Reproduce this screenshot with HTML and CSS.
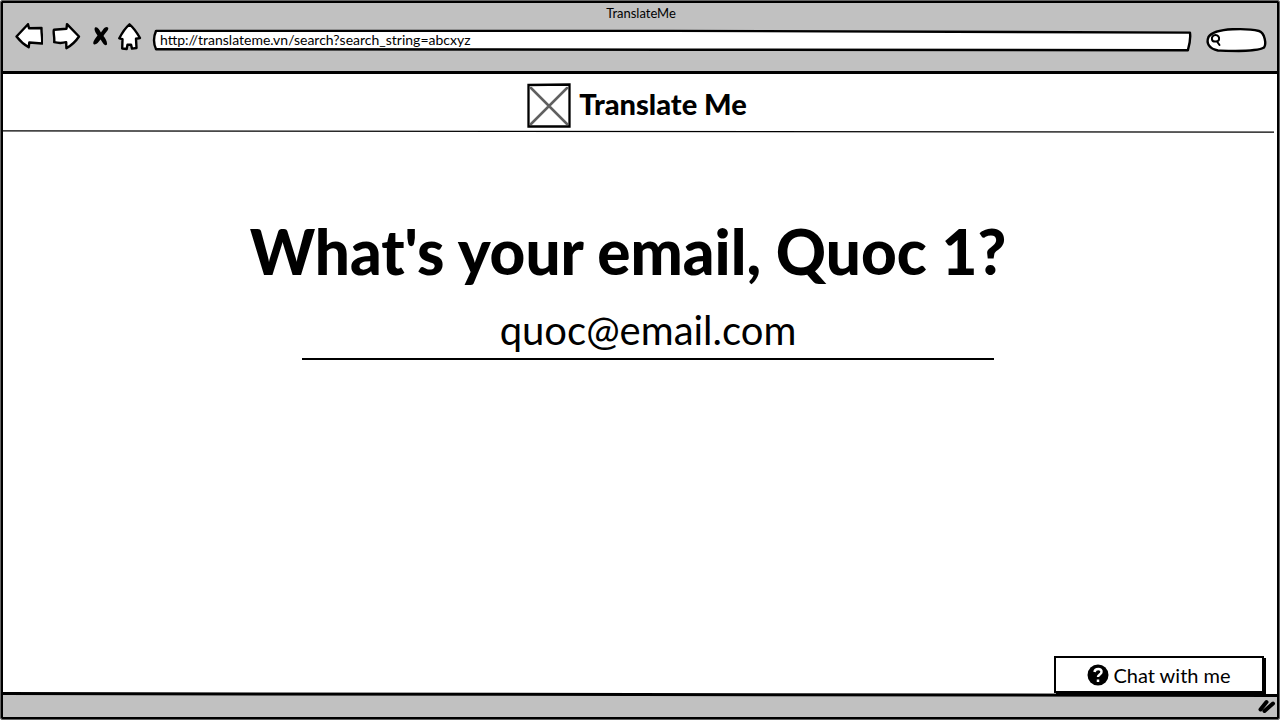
FILE: index.html
```html
<!DOCTYPE html>
<html lang="en">
<head>
<meta charset="utf-8">
<meta name="viewport" content="width=device-width, initial-scale=1">
<title>TranslateMe</title>
<link rel="stylesheet" href="styles.css">
</head>
<body>
<div class="window">
  <header class="chrome">
    <div class="window-title">TranslateMe</div>
    <nav class="toolbar" aria-label="Browser">
      <button class="tool back" aria-label="Back"><svg width="28" height="28" viewBox="0 0 28 28"><path class="ink" d="M1.500 13.500 13 1.200l1 4 12.500-.2c-.3 5 1.200 10 .6 15.500l-12.800-1-.6 4.800Q7 20.500 1.500 13.500Z"/></svg></button>
      <button class="tool forward" aria-label="Forward"><svg width="30" height="28" viewBox="0 0 30 28"><path class="ink" d="M28 13.500 16 1.200l-.5 4.500-12.500 1c-1.200 2 .8 7 .2 12.500q6 1.500 12 0l.2 6Q23 21 28 13.500Z"/></svg></button>
      <button class="tool stop" aria-label="Stop"><svg width="18" height="22" viewBox="0 0 18 22"><path class="cross" d="M3 1.500C5.500 0 7.500 4 9 6.500 11 3.500 13.500-.5 16 1.500 17.500 3.500 13 7 11.500 10c2 2.500 4 6 3.500 8.500-2.500 2.500-4.500-2.500-6.500-5-2 2.500-4 5.500-6.500 5C-.5 16.500 3.500 12.500 5.500 9.500 4 7 1.500 4 3 1.500Z"/></svg></button>
      <button class="tool home" aria-label="Home"><svg width="24" height="28" viewBox="0 0 24 28"><path class="ink" d="M11.500 1.300Q6 6 1.300 15.300l3.200.9-.3 9.300 4.500.5.800-4.200 3.500-.2 1 4 4.500-.6-.5-9.300 4-.7Q17 6 11.500 1.300Z"/></svg></button>
      <label class="address">
        <svg class="frame" viewBox="0 0 1000 20" preserveAspectRatio="none" aria-hidden="true"><path class="ink" d="M2 .8 500 .8 999 2.500Q1000 9 997 19.500L500 19 2 18.500Q-2 10 2 .8Z"/></svg>
        <input type="text" aria-label="Address" value="http://translateme.vn/search?search_string=abcxyz">
      </label>
      <label class="search">
        <svg class="frame" viewBox="0 0 60 25" preserveAspectRatio="none" aria-hidden="true"><path class="ink" d="M1.500 9C8-1 42 .5 52 3c6 2 7.500 13 5 16.500-7 4.500-30 3.500-46 3C2 21-1 15 1.500 9Z"/></svg>
        <svg class="lens" width="12" height="14" viewBox="0 0 12 14" aria-hidden="true"><path d="M5.500 2C3 2 1.500 4 2 6.500 2.500 9.500 8.500 9 9 6.500 9.500 4 8 2 5.500 2ZM7 8.500 9.500 12"/></svg>
        <input type="search" aria-label="Search">
      </label>
    </nav>
  </header>
  <svg class="edge" viewBox="0 0 100 3" preserveAspectRatio="none" aria-hidden="true"><path d="M0 0H100V3H0Z"/></svg>
  <main class="page">
    <div class="brand">
      <svg width="44" height="45" viewBox="0 0 44 45" aria-hidden="true"><path class="diagonal" d="M4 5 40 41M40 5 4 41"/><path class="box" d="M1.500 2 42.500 1.500 42.500 43.500 1.500 43.500Z"/></svg>
      <span>Translate Me</span>
    </div>
    <svg class="divider" viewBox="0 0 100 3" preserveAspectRatio="none" aria-hidden="true"><path d="M0 .8 100 2.200"/></svg>
    <form class="question">
      <h1><label for="email">What's your email, Quoc 1?</label></h1>
      <input id="email" type="text" value="quoc@email.com">
    </form>
  </main>
  <footer class="status">
    <svg class="edge" viewBox="0 0 100 5" preserveAspectRatio="none" aria-hidden="true"><path class="paper" d="M0 0H100V3H0Z"/><path d="M0 0 100 2V5L0 3Z"/></svg>
    <svg class="grip" width="18" height="14" viewBox="0 0 18 14" aria-hidden="true"><path d="M2.500 10.500 8.500 3M6.500 12 15 4.500"/></svg>
  </footer>
  <button class="chat">
    <svg width="22" height="22" viewBox="0 0 22 22" aria-hidden="true"><circle cx="11" cy="11" r="10.500"/><path d="M7.500 8C8 4 15 4 14.500 8c0 2.500-3.500 2.500-3.500 5M11 15.500v2.500"/></svg>
    <span>Chat with me</span>
  </button>
</div>
</body>
</html>
```

FILE: styles.css
```css
* {
  box-sizing: border-box;
}

body {
  margin: 0;
  background: #fff;
  color: #000;
  font-family: Lato, "Open Sans", sans-serif;
}

button,
input {
  font: inherit;
  color: inherit;
  margin: 0;
  padding: 0;
  border: 0;
  background: none;
  outline: 0;
}

svg {
  display: block;
  flex: none;
}

.window {
  position: relative;
  display: flex;
  flex-direction: column;
  min-height: 100vh;
  border: 1px solid #666;
  border-radius: 2px;
  box-shadow: inset 0 0 0 2px #000;
  padding: 2px;
}

.chrome {
  background: #c1c1c1;
  padding: 2px 10px 18px 12px;
}

.window-title {
  text-align: center;
  font-size: 13px;
  line-height: 16px;
}

.toolbar {
  display: flex;
  align-items: center;
  height: 32px;
}

.ink {
  fill: #fff;
  stroke: #000;
  stroke-width: 2.4;
  stroke-linejoin: round;
  vector-effect: non-scaling-stroke;
}

.back {
  margin-right: 8px;
}

.forward {
  margin-right: 11px;
}

.stop {
  margin-right: 8px;
}

.home {
  margin-right: 12px;
}

.address,
.search {
  display: grid;
  align-items: center;
}

.address > *,
.search > * {
  grid-area: 1 / 1;
}

.frame {
  width: 100%;
  height: 100%;
  overflow: visible;
}

.address {
  flex: 1;
  height: 20px;
  margin: 6px 16px 0 0;
  font-size: 14px;
}

.address input {
  width: 100%;
  padding: 0 6px 2px;
  position: relative;
}

.search {
  width: 60px;
  height: 25px;
  margin-top: 6px;
  font-size: 12px;
}

.search input {
  width: 100%;
  padding: 0 8px 0 18px;
  position: relative;
  appearance: none;
}

.lens {
  margin-left: 3px;
  fill: none;
  stroke: #000;
  stroke-width: 2;
  stroke-linecap: round;
}

.edge {
  width: 100%;
  height: 3px;
}

.page {
  flex: 1;
  display: flex;
  flex-direction: column;
}

.brand {
  display: flex;
  justify-content: center;
  align-items: center;
  gap: 8px;
  padding: 9px 6px 2px 0;
  font-size: 29px;
  font-weight: 900;
  line-height: 40px;
}

.brand span {
  padding-bottom: 4px;
}

.diagonal {
  fill: none;
  stroke: #606060;
  stroke-width: 2.5;
  stroke-linecap: round;
}

.box {
  fill: none;
  stroke: #000;
  stroke-width: 2.3;
}

.divider {
  width: calc(100% - 3px);
  height: 3px;
}

.divider path {
  fill: none;
  stroke: #000;
  stroke-width: 1.3;
  vector-effect: non-scaling-stroke;
}

.question {
  display: flex;
  flex-direction: column;
  align-items: center;
  padding: 82px 0 60px 16px;
}

.question h1 {
  margin: 0 40px 0 0;
  font-size: 62px;
  line-height: 72px;
  font-weight: 900;
  text-align: center;
}

.question input {
  width: 55%;
  min-width: 300px;
  height: 60px;
  margin-top: 13px;
  padding-top: 2px;
  border-bottom: 2px solid #000;
  font-size: 40px;
  text-align: center;
}

.status {
  background: #c1c1c1;
}

.status .edge {
  height: 5px;
}

.paper {
  fill: #fff;
}

.grip {
  margin: 2px 1px 4px auto;
  fill: none;
  stroke: #000;
  stroke-width: 4;
  stroke-linecap: round;
}

.chat {
  position: absolute;
  right: 15px;
  bottom: 26px;
  display: flex;
  align-items: center;
  justify-content: center;
  gap: 4px;
  width: 210px;
  height: 37px;
  border: 2px solid #000;
  box-shadow: 2px 2px 0 #000;
  background: #fff;
  font-size: 20px;
}

.chat path {
  fill: none;
  stroke: #fff;
  stroke-width: 2.5;
}

.cross {
  fill: #000;
}
```
